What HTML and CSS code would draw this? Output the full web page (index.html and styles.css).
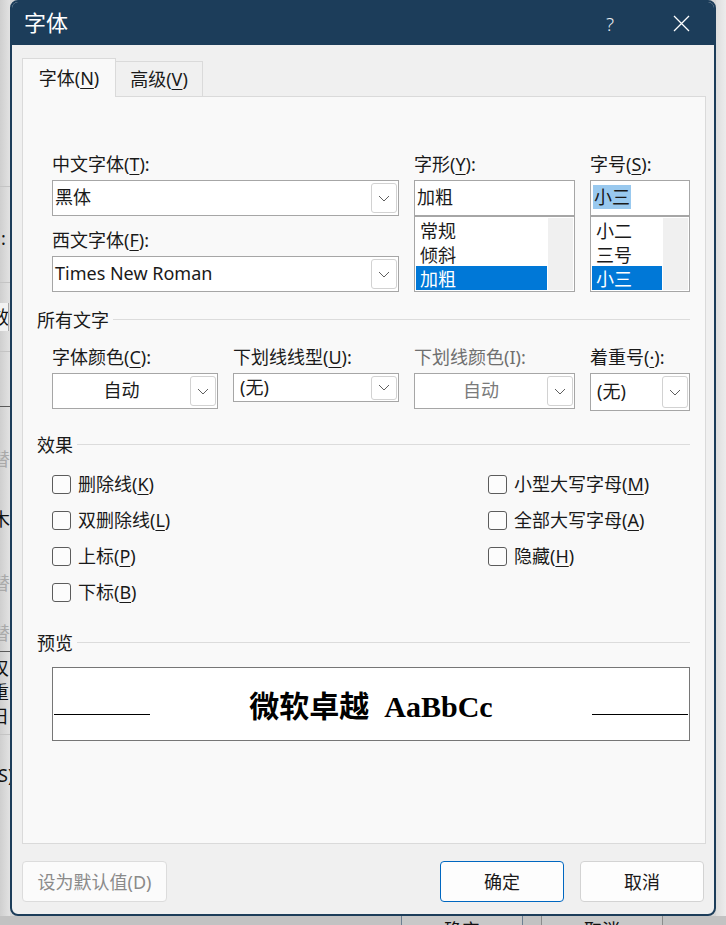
FILE: index.html
```html
<!DOCTYPE html>
<html lang="zh-CN">
<head>
<meta charset="utf-8">
<title>字体</title>
<link rel="stylesheet" href="styles.css">
</head>
<body>
<div class="screen">
  <div class="behind-left">
    <div class="bl-rule r1"></div>
    <div class="bl-glyph g-colon">:</div>
    <div class="bl-rule r2"></div>
    <div class="bl-box"><span>效</span></div>
    <div class="bl-rule r3"></div>
    <div class="bl-rule dark r4"></div>
    <div class="bl-glyph faint g1">替</div>
    <div class="bl-glyph g2">木</div>
    <div class="bl-glyph faint g3">替</div>
    <div class="bl-glyph faint g4">替</div>
    <div class="bl-rule dark r5"></div>
    <div class="bl-glyph g5">叹</div>
    <div class="bl-glyph g6">重</div>
    <div class="bl-glyph g7">日</div>
    <div class="bl-rule r6"></div>
    <div class="bl-glyph g8">S)</div>
  </div>

  <div class="window">
    <div class="titlebar">
      <div class="title">字体</div>
      <div class="tb-btn help">?</div>
      <div class="tb-btn close">
        <svg width="17" height="17" viewBox="0 0 17 17"><path d="M1 1L16 16M16 1L1 16" stroke="#ffffff" stroke-width="1.3" fill="none"/></svg>
      </div>
    </div>

    <div class="body">
      <div class="tabs">
        <div class="tab active">字体(<u>N</u>)</div>
        <div class="tab">高级(<u>V</u>)</div>
      </div>

      <div class="panel">
        <div class="row1">
          <div class="fonts">
            <div class="field">
              <span class="fld-label">中文字体(<u>T</u>):</span>
              <div class="combo"><span class="val">黑体</span><span class="drop"><svg width="12" height="7" viewBox="0 0 12 7"><polyline points="1,1 6,6 11,1" fill="none" stroke="#5f5f5f" stroke-width="1"/></svg></span></div>
            </div>
            <div class="field">
              <span class="fld-label">西文字体(<u>F</u>):</span>
              <div class="combo"><span class="val">Times New Roman</span><span class="drop"><svg width="12" height="7" viewBox="0 0 12 7"><polyline points="1,1 6,6 11,1" fill="none" stroke="#5f5f5f" stroke-width="1"/></svg></span></div>
            </div>
          </div>

          <div class="field">
            <span class="fld-label">字形(<u>Y</u>):</span>
            <div class="entry">加粗</div>
            <div class="list">
              <div class="items">
                <div class="item">常规</div>
                <div class="item">倾斜</div>
                <div class="item sel">加粗</div>
              </div>
              <div class="sbar"></div>
            </div>
          </div>

          <div class="field">
            <span class="fld-label">字号(<u>S</u>):</span>
            <div class="entry"><span class="selection">小三</span></div>
            <div class="list">
              <div class="items">
                <div class="item">小二</div>
                <div class="item">三号</div>
                <div class="item sel">小三</div>
              </div>
              <div class="sbar"></div>
            </div>
          </div>
        </div>

        <div class="sec sec-all">所有文字</div>

        <div class="row2">
          <div class="field">
            <span class="fld-label">字体颜色(<u>C</u>):</span>
            <div class="combo"><span class="val center">自动</span><span class="drop"><svg width="12" height="7" viewBox="0 0 12 7"><polyline points="1,1 6,6 11,1" fill="none" stroke="#5f5f5f" stroke-width="1"/></svg></span></div>
          </div>
          <div class="field">
            <span class="fld-label">下划线线型(<u>U</u>):</span>
            <div class="combo short"><span class="val pad">(无)</span><span class="drop"><svg width="12" height="7" viewBox="0 0 12 7"><polyline points="1,1 6,6 11,1" fill="none" stroke="#5f5f5f" stroke-width="1"/></svg></span></div>
          </div>
          <div class="field disabled">
            <span class="fld-label">下划线颜色(I):</span>
            <div class="combo"><span class="val center">自动</span><span class="drop"><svg width="12" height="7" viewBox="0 0 12 7"><polyline points="1,1 6,6 11,1" fill="none" stroke="#5f5f5f" stroke-width="1"/></svg></span></div>
          </div>
          <div class="field">
            <span class="fld-label">着重号(<u>·</u>):</span>
            <div class="combo tall"><span class="val pad">(无)</span><span class="drop"><svg width="12" height="7" viewBox="0 0 12 7"><polyline points="1,1 6,6 11,1" fill="none" stroke="#5f5f5f" stroke-width="1"/></svg></span></div>
          </div>
        </div>

        <div class="sec sec-effects">效果</div>

        <div class="effects">
          <div class="eff-col left">
            <div class="check"><span class="box"></span><span>删除线(<u>K</u>)</span></div>
            <div class="check"><span class="box"></span><span>双删除线(<u>L</u>)</span></div>
            <div class="check"><span class="box"></span><span>上标(<u>P</u>)</span></div>
            <div class="check"><span class="box"></span><span>下标(<u>B</u>)</span></div>
          </div>
          <div class="eff-col">
            <div class="check"><span class="box"></span><span>小型大写字母(<u>M</u>)</span></div>
            <div class="check"><span class="box"></span><span>全部大写字母(<u>A</u>)</span></div>
            <div class="check"><span class="box"></span><span>隐藏(<u>H</u>)</span></div>
          </div>
        </div>

        <div class="sec sec-preview">预览</div>

        <div class="preview">
          <div class="pv-line l"></div>
          <div class="pv-text"><span class="pv-zh">微软卓越</span><span class="pv-en">AaBbCc</span></div>
          <div class="pv-line r"></div>
        </div>
      </div>

      <div class="buttons">
        <div class="btn set-default">设为默认值(D)</div>
        <div class="btn ok">确定</div>
        <div class="btn">取消</div>
      </div>
    </div>
  </div>

  <div class="behind-right"></div>
</div>

<div class="behind-bottom">
  <div class="bb-btn bb-ok">确定</div>
  <div class="bb-btn bb-cancel">取消</div>
</div>
</body>
</html>
```

FILE: styles.css
```css
* { box-sizing: border-box; }

html, body {
  margin: 0;
  padding: 0;
}

body {
  width: 726px;
  height: 925px;
  overflow: hidden;
  background: #d6d6d6;
  font-family: "Noto Sans", "Noto Sans CJK SC", sans-serif;
  font-size: 18px;
  color: #1a1a1a;
}

u {
  text-decoration: underline;
  text-decoration-thickness: 1px;
  text-underline-offset: 3px;
}

.screen {
  display: flex;
  height: 916px;
}

/* ---------- things behind the dialog ---------- */
.behind-left {
  width: 10px;
  flex: none;
  overflow: hidden;
  background: linear-gradient(to right, #cfcfcf, #e2e2e2);
  display: flex;
  flex-direction: column;
  font-size: 18px;
  line-height: 24px;
  color: #111;
}

.bl-rule { height: 1px; background: #c4c4c4; flex: none; }
.bl-rule.dark { background: #5a5a5a; }
.bl-glyph { height: 24px; flex: none; white-space: nowrap; }
.bl-glyph.faint { color: #a9a9a9; }

.r1 { margin-top: 186px; }
.g-colon { margin-top: 39px; padding-left: 1px; }
.r2 { margin-top: 32px; }
.bl-box {
  margin-top: 20px;
  height: 28px;
  width: 9px;
  border-right: 1px solid #a8a8a8;
  background: #f2f2f2;
  overflow: hidden;
  line-height: 28px;
  flex: none;
}
.bl-box span { display: block; margin-left: -9px; }
.r3 { margin-top: 20px; }
.r4 { margin-top: 54px; }
.g1 { margin-top: 40px; margin-left: -8px; }
.g2 { margin-top: 36px; margin-left: -8px; }
.g3 { margin-top: 40px; margin-left: -8px; }
.g4 { margin-top: 26px; margin-left: -8px; }
.r5 { margin-top: 6px; }
.g5 { margin-top: 4px; margin-left: -9px; }
.g6 { margin-left: -9px; }
.g7 { margin-left: -9px; }
.r6 { margin-top: 6px; }
.g8 { margin-top: 28px; margin-left: -2px; }

.behind-right {
  flex: 1;
  background: linear-gradient(to right, #dedede, #ececec);
}

.behind-bottom {
  height: 9px;
  background: #c2c2c2;
  display: flex;
  overflow: hidden;
  padding-left: 401px;
}

.bb-btn {
  width: 122px;
  height: 30px;
  border-left: 1px solid #6d7f92;
  border-right: 1px solid #6d7f92;
  text-align: center;
  line-height: 24px;
  padding-top: 2px;
  color: #111;
  background: #c8c8c8;
}

.bb-cancel {
  margin-left: 18px;
  border-color: #8c8c8c;
}

/* ---------- the dialog window ---------- */
.window {
  width: 706px;
  height: 916px;
  flex: none;
  border: 2px solid #1c3d5a;
  border-radius: 8px;
  overflow: hidden;
  background: #f0f0f0;
  display: flex;
  flex-direction: column;
}

.titlebar {
  height: 43px;
  flex: none;
  background: #1c3d5a;
  color: #ffffff;
  display: flex;
  align-items: center;
  padding-left: 12px;
}

.title {
  flex: 1;
  font-size: 22px;
  line-height: 30px;
  margin-top: -3px;
}

.tb-btn {
  width: 46px;
  height: 43px;
  display: flex;
  align-items: center;
  justify-content: center;
}

.help {
  margin-right: 25px;
  font-size: 19px;
  font-weight: 300;
  color: #e8edf2;
}

.close {
  margin-right: 10px;
}

.body {
  flex: 1;
  padding: 13px 8px 12px 10px;
  display: flex;
  flex-direction: column;
}

/* tabs */
.tabs {
  display: flex;
  align-items: flex-end;
  height: 38px;
  flex: none;
}

.tab {
  width: 87px;
  height: 35px;
  border-top: 1px solid #dadada;
  border-right: 1px solid #dadada;
  background: #f0f0f0;
  display: flex;
  align-items: center;
  justify-content: center;
  line-height: 24px;
}

.tab.active {
  width: 94px;
  height: 39px;
  margin-bottom: -1px;
  border-left: 1px solid #dadada;
  background: #f9f9f9;
  position: relative;
  z-index: 1;
}

/* panel */
.panel {
  height: 748px;
  flex: none;
  border: 1px solid #dadada;
  background: #f9f9f9;
  padding: 55px 15px 0 14px;
}

.fld-label {
  display: block;
  height: 24px;
  line-height: 24px;
  margin-bottom: 4px;
  white-space: nowrap;
}

.row1 {
  display: grid;
  grid-template-columns: 347px 161px 100px;
  column-gap: 15px;
  margin-left: 15px;
}

.fonts .field + .field {
  margin-top: 12px;
}

.combo {
  height: 36px;
  border: 1px solid #a6a6a6;
  background: #ffffff;
  display: flex;
  align-items: center;
}

.combo.short { height: 29px; }
.combo.short .drop { height: 24px; }
.combo.tall { height: 38px; }
.combo.tall .drop { height: 32px; }

.combo .val {
  flex: 1;
  padding-left: 2px;
  white-space: nowrap;
  overflow: hidden;
  line-height: 24px;
  margin-top: -2px;
}

.combo .val.center {
  text-align: center;
  padding-left: 0;
}

.combo .val.pad {
  padding-left: 6px;
}

.drop {
  width: 26px;
  height: 30px;
  margin-right: 1px;
  flex: none;
  border: 1px solid #d2d2d2;
  border-radius: 3px;
  background: #ffffff;
  display: flex;
  align-items: center;
  justify-content: center;
}

.entry {
  height: 36px;
  border: 1px solid #a6a6a6;
  background: #ffffff;
  padding-left: 2px;
  line-height: 32px;
  white-space: nowrap;
}

.selection {
  background: #99c9ef;
  padding: 0 1px;
  line-height: 24px;
  display: inline-block;
}

.list {
  height: 76px;
  border: 1px solid #a6a6a6;
  background: #ffffff;
  padding: 1px;
  display: flex;
}

.items { flex: 1; }

.item {
  height: 24px;
  line-height: 26px;
  padding-left: 4px;
  white-space: nowrap;
}

.item.sel {
  background: #0078d7;
  color: #ffffff;
}

.sbar {
  width: 25px;
  margin-left: 1px;
  background: #f0f0f0;
}

/* section headings */
.sec {
  display: flex;
  align-items: center;
  height: 24px;
  line-height: 24px;
  white-space: nowrap;
}

.sec::after {
  content: "";
  flex: 1;
  height: 1px;
  background: #dcdcdc;
  margin-left: 4px;
  margin-top: -1px;
}

.sec-all { margin-top: 16px; }
.sec-effects { margin-top: 22px; }
.sec-preview { margin-top: 27px; }

.row2 {
  display: grid;
  grid-template-columns: 166px 166px 161px 100px;
  column-gap: 15px;
  margin: 13px 0 0 15px;
  align-items: start;
}

.field.disabled .fld-label { color: #6f6f6f; }
.field.disabled .val { color: #7a7a7a; }

/* effects */
.effects {
  display: flex;
  margin: 15px 0 0 15px;
}

.eff-col {
  display: flex;
  flex-direction: column;
  gap: 12px;
}

.eff-col.left { width: 436px; }

.check {
  display: flex;
  align-items: center;
  gap: 7px;
  height: 24px;
  line-height: 24px;
  white-space: nowrap;
}

.box {
  width: 19px;
  height: 19px;
  flex: none;
  border: 1px solid #5c5c5c;
  border-radius: 3px;
  background: #fcfcfc;
}

/* preview */
.preview {
  margin: 12px 0 0 15px;
  height: 74px;
  border: 1px solid #767676;
  background: #ffffff;
  display: flex;
}

.pv-line {
  width: 96px;
  height: 1px;
  flex: none;
  background: #000000;
  margin-top: 46px;
}

.pv-line.l { margin-left: 1px; }
.pv-line.r { margin-right: 1px; }

.pv-text {
  flex: 1;
  text-align: center;
  padding-top: 16px;
  line-height: 40px;
  font-size: 30px;
  color: #000000;
  white-space: nowrap;
}

.pv-zh {
  font-family: "Noto Sans CJK SC", sans-serif;
  font-weight: 700;
}

.pv-en {
  font-family: "Liberation Serif", serif;
  font-weight: 700;
  margin-left: 15px;
}

/* buttons */
.buttons {
  display: flex;
  gap: 16px;
  margin: 17px 2px 0 0;
  flex: none;
}

.btn {
  width: 124px;
  height: 41px;
  border: 1px solid #d3d3d3;
  border-radius: 4px;
  background: #fdfdfd;
  display: flex;
  align-items: center;
  justify-content: center;
  line-height: 24px;
  color: #1a1a1a;
}

.btn.set-default {
  width: 145px;
  margin-right: auto;
  color: #8a8a8a;
  border-color: #dcdcdc;
  background: #fbfbfb;
}

.btn.ok {
  border-color: #0067c0;
}
```
